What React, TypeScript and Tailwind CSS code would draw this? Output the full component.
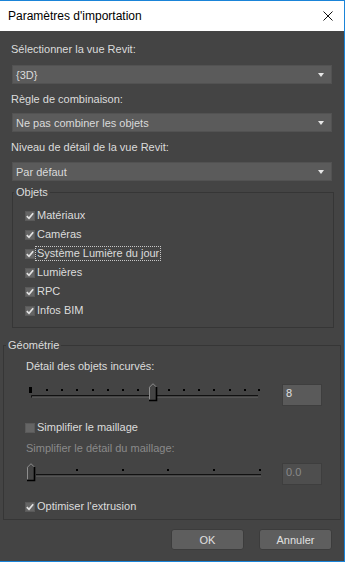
import React from 'react'

const FONT = { fontFamily: '"Liberation Sans", Arial, sans-serif' }

function Check({ checked }: { checked: boolean }) {
  return (
    <div className="w-[10px] h-[10px] bg-[#656565] border border-[#5a5a5a] flex items-center justify-center shrink-0">
      {checked && (
        <svg width="8" height="8" viewBox="0 0 8 8">
          <path d="M0.8 4.2 L3 6.3 L7.2 1.2" fill="none" stroke="#e2e2e2" strokeWidth="1.7" />
        </svg>
      )}
    </div>
  )
}

function CheckRow({ label, checked, focused, className }: { label: string; checked: boolean; focused?: boolean; className?: string }) {
  return (
    <div className={`flex items-center h-[19px] ${className ?? ''}`}>
      <Check checked={checked} />
      <span
        className={`px-[1px] leading-[13px] border ${
          focused ? 'border-dotted border-[#c8c8c8]' : 'border-transparent'
        }`}
      >
        {label}
      </span>
    </div>
  )
}

function Dropdown({ value, className }: { value: string; className?: string }) {
  return (
    <div className={`ml-[12px] w-[320px] h-[19px] bg-[#5b5b5b] border border-[#525252] flex items-center justify-between pl-[3px] pr-[7px] ${className ?? ''}`}>
      <span className="text-[#dadada]">{value}</span>
      <svg width="6" height="4" viewBox="0 0 6 4">
        <path d="M0 0 H6 L3 4 Z" fill="#e6e6e6" />
      </svg>
    </div>
  )
}

function Thumb({ x, y }: { x: number; y: number }) {
  // classic pentagon trackbar thumb, pointing up
  return (
    <g transform={`translate(${x} ${y})`}>
      <path d="M0 4 L4 0 L8 4 V17 H0 Z" fill="#444" />
      <path d="M0.5 16.5 V4.2 L4 0.7 L7 3.7" fill="none" stroke="#8e8e8e" strokeWidth="1" />
      <path d="M7.5 4 V17.5 H0" fill="none" stroke="#000" strokeWidth="1.6" />
    </g>
  )
}

function SliderDetail() {
  const dots = [19, 34, 49, 65, 80, 95, 110, 141, 156, 171, 186, 202, 217, 231]
  return (
    <svg width="235" height="20" viewBox="0 0 235 20" className="shrink-0">
      <rect x="2" y="5" width="3" height="6" fill="#000" />
      {dots.map((d) => (
        <rect key={d} x={d} y="7" width="2" height="2" fill="#000" />
      ))}
      <path d="M4.5 15.5 V13.5 H231" fill="none" stroke="#111" strokeWidth="1" />
      <path d="M5 15.5 H231" stroke="#555" strokeWidth="1" />
      <Thumb x={122} y={1} />
    </svg>
  )
}

function SliderMesh() {
  const dots = [52, 98, 143, 189, 235]
  return (
    <svg width="240" height="22" viewBox="0 0 240 22" className="shrink-0">
      {dots.map((d) => (
        <rect key={d} x={d - 1} y="8" width="2" height="2" fill="#000" />
      ))}
      <path d="M11 13.5 H236" stroke="#111" strokeWidth="1" />
      <path d="M11 15.5 H236" stroke="#555" strokeWidth="1" />
      <Thumb x={2} y={2} />
    </svg>
  )
}

export default function App() {
  const objects = [
    { label: 'Matériaux', checked: true },
    { label: 'Caméras', checked: true },
    { label: 'Système Lumière du jour', checked: true, focused: true },
    { label: 'Lumières', checked: true },
    { label: 'RPC', checked: true },
    { label: 'Infos BIM', checked: true },
  ]

  return (
    <div className="w-[346px] h-[563px] bg-white" style={FONT}>
      <div className="w-[345px] h-[562px] border-t border-r border-b border-[#1a84d8] flex flex-col">
        {/* Title bar */}
        <div className="h-[30px] bg-white flex items-center justify-between pl-[8px] pr-[11px] shrink-0">
          <span className="text-[12px] text-black">Paramètres d'importation</span>
          <svg width="10" height="10" viewBox="0 0 10 10">
            <path d="M0.5 0.5 L9.5 9.5 M9.5 0.5 L0.5 9.5" stroke="#111" strokeWidth="1" />
          </svg>
        </div>

        {/* Body */}
        <div className="flex-1 bg-[#444444] text-[11px] leading-[16px] text-[#dcdcdc] flex flex-col">
          <div className="mt-[10px] ml-[11px]">Sélectionner la vue Revit:</div>
          <Dropdown value="{3D}" className="mt-[8px]" />
          <div className="mt-[7px] ml-[11px]">Règle de combinaison:</div>
          <Dropdown value="Ne pas combiner les objets" className="mt-[6px]" />
          <div className="mt-[7px] ml-[11px]">Niveau de détail de la vue Revit:</div>
          <Dropdown value="Par défaut" className="mt-[7px]" />

          {/* Objets */}
          <fieldset className="mt-[3px] ml-[12px] w-[322px] border border-[#363636] pt-[6px] pb-[7px]">
            <legend className="ml-[1px] px-[2px] leading-[16px]">Objets</legend>
            {objects.map((o) => (
              <CheckRow key={o.label} label={o.label} checked={o.checked} focused={o.focused} className="ml-[12px]" />
            ))}
          </fieldset>

          {/* Géométrie */}
          <fieldset className="mt-[9px] ml-[3px] w-[338px] border border-[#363636] pt-[5px] pb-[3px]">
            <legend className="ml-[2px] px-[2px] leading-[16px]">Géométrie</legend>
            <div className="ml-[22px]">Détail des objets incurvés:</div>
            <div className="mt-[8px] flex items-start">
              <div className="ml-[23px]">
                <SliderDetail />
              </div>
              <div className="ml-[20px] mt-[2px] w-[40px] h-[22px] bg-[#5a5a5a] border border-[#3e3e3e] pl-[3px] pt-[1px] leading-[14px] text-[#e0e0e0]">
                8
              </div>
            </div>
            <CheckRow label="Simplifier le maillage" checked={false} className="mt-[12px] ml-[21px] h-[18px]" />
            <div className="mt-[3px] ml-[22px] text-[#8a8a8a]">Simplifier le détail du maillage:</div>
            <div className="mt-[5px] flex items-start">
              <div className="ml-[21px]">
                <SliderMesh />
              </div>
              <div className="ml-[17px] mt-[2px] w-[40px] h-[22px] bg-[#4e4e4e] border border-[#3e3e3e] pl-[3px] pt-[1px] leading-[14px] text-[#8a8a8a]">
                0.0
              </div>
            </div>
            <CheckRow label="Optimiser l'extrusion" checked className="mt-[12px] ml-[21px] h-[18px]" />
          </fieldset>

          {/* Buttons */}
          <div className="mt-[9px] flex justify-end gap-[15px] pr-[12px]">
            <button className="w-[73px] h-[21px] rounded-[3px] bg-[#5e5e5e] border border-[#3c3c3c] text-[#e0e0e0] text-[11px]">
              OK
            </button>
            <button className="w-[73px] h-[21px] rounded-[3px] bg-[#5e5e5e] border border-[#3c3c3c] text-[#e0e0e0] text-[11px]">
              Annuler
            </button>
          </div>
        </div>
      </div>
    </div>
  )
}
